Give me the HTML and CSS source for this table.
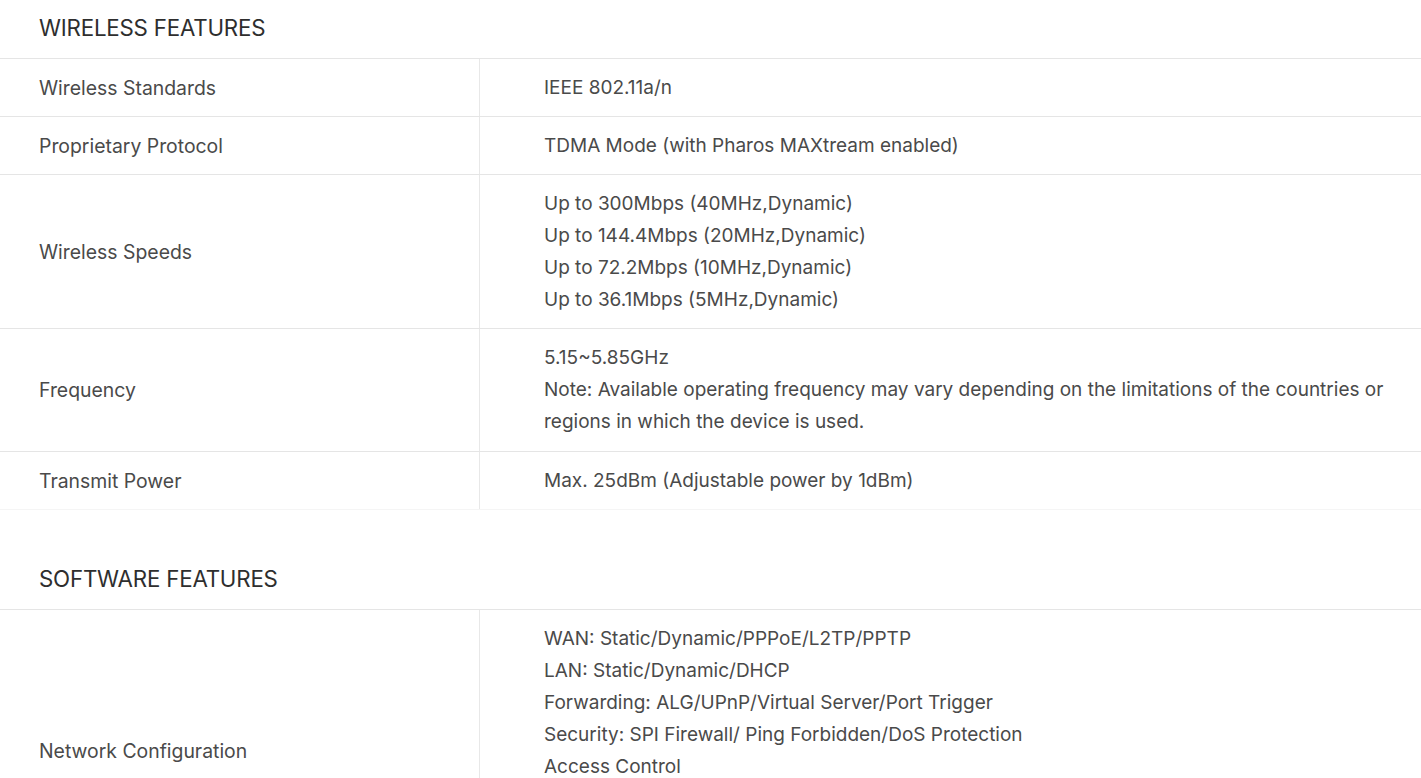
FILE: index.html
```html
<!DOCTYPE html>
<html>
<head>
<meta charset="utf-8">
<link rel="stylesheet" href="styles.css">
</head>
<body>
<section class="spec">
  <h2 class="spec-title">WIRELESS FEATURES</h2>
  <div class="spec-table">
    <div class="row">
      <div class="label">Wireless Standards</div>
      <div class="value">IEEE 802.11a/n</div>
    </div>
    <div class="row">
      <div class="label">Proprietary Protocol</div>
      <div class="value">TDMA Mode (with Pharos MAXtream enabled)</div>
    </div>
    <div class="row">
      <div class="label">Wireless Speeds</div>
      <div class="value">Up to 300Mbps (40MHz,Dynamic)<br>Up to 144.4Mbps (20MHz,Dynamic)<br>Up to 72.2Mbps (10MHz,Dynamic)<br>Up to 36.1Mbps (5MHz,Dynamic)</div>
    </div>
    <div class="row row-tall">
      <div class="label">Frequency</div>
      <div class="value">5.15~5.85GHz<br>Note: Available operating frequency may vary depending on the limitations of the countries or<br>regions in which the device is used.</div>
    </div>
    <div class="row row-last">
      <div class="label">Transmit Power</div>
      <div class="value">Max. 25dBm (Adjustable power by 1dBm)</div>
    </div>
  </div>
</section>
<section class="spec spec-second">
  <h2 class="spec-title">SOFTWARE FEATURES</h2>
  <div class="spec-table">
    <div class="row row-network">
      <div class="label">Network Configuration</div>
      <div class="value">WAN: Static/Dynamic/PPPoE/L2TP/PPTP<br>LAN: Static/Dynamic/DHCP<br>Forwarding: ALG/UPnP/Virtual Server/Port Trigger<br>Security: SPI Firewall/ Ping Forbidden/DoS Protection<br>Access Control</div>
    </div>
  </div>
</section>
</body>
</html>
```
FILE: styles.css
```css
html, body {
  margin: 0;
  padding: 0;
  background: #fff;
}
body {
  font-family: Inter, "Noto Sans", sans-serif;
  color: #4a4a4a;
  overflow: hidden;
}
.spec-title {
  margin: 0;
  height: 58px;
  box-sizing: border-box;
  padding-bottom: 3px;
  display: flex;
  align-items: center;
  padding-left: 39px;
  font-size: 22.3px;
  font-weight: 400;
  color: #2e2e2e;
  border-bottom: 1px solid #e5e5e5;
  letter-spacing: -0.2px;
}
.spec-title {
  height: 59px;
}
.spec-second {
  margin-top: 41px;
}
.row {
  display: grid;
  grid-template-columns: 480px 1fr;
  border-bottom: 1px solid #e5e5e5;
  font-size: 19px;
  line-height: 32px;
}
.row-tall .value {
  padding-bottom: 13px;
}
.row-last {
  border-bottom-color: #f5f5f5;
}
.row-network {
  min-height: 282px;
  align-items: stretch;
}
.label {
  display: flex;
  align-items: center;
  padding-left: 39px;
  border-right: 1px solid #e8e8e8;
  font-size: 19.4px;
}
.value {
  padding: 13px 20px 12px 64px;
}
```
